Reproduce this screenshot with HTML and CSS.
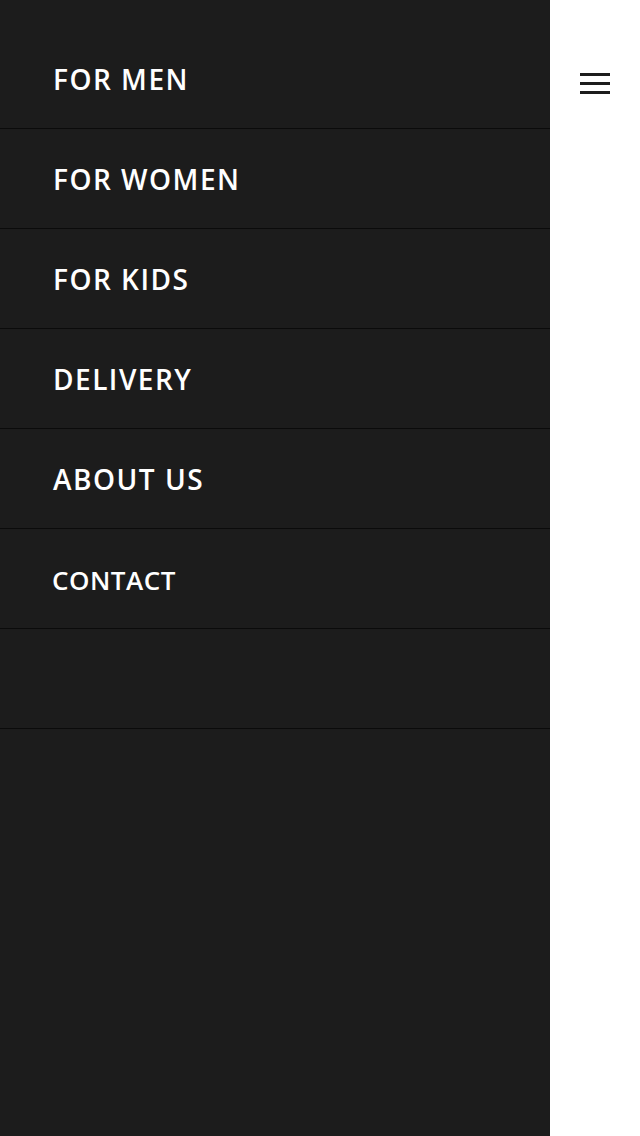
FILE: index.html
```html
<!DOCTYPE html>
<html>
<head>
<meta charset="utf-8">
<link rel="stylesheet" href="styles.css">
</head>
<body>
<div class="page">
  <nav class="panel">
    <ul class="menu">
      <li class="item"><a href="#">FOR MEN</a></li>
      <li class="item"><a href="#">FOR WOMEN</a></li>
      <li class="item"><a href="#">FOR KIDS</a></li>
      <li class="item"><a href="#">DELIVERY</a></li>
      <li class="item"><a href="#">ABOUT US</a></li>
      <li class="item contact"><a href="#">CONTACT</a></li>
      <li class="item empty"></li>
    </ul>
  </nav>
  <div class="side">
    <button class="burger" aria-label="menu">
      <span></span><span></span><span></span>
    </button>
  </div>
</div>
</body>
</html>
```

FILE: styles.css
```css
html, body {
  margin: 0;
  padding: 0;
  height: 100%;
  background: #ffffff;
}
.page {
  display: flex;
  height: 1136px;
}
.panel {
  width: 550px;
  background: #1c1c1c;
  padding-top: 29px;
  box-sizing: border-box;
}
.menu {
  list-style: none;
  margin: 0;
  padding: 0;
}
.item {
  height: 99px;
  border-bottom: 1px solid #0b0b0b;
  display: flex;
  align-items: center;
  padding-left: 53px;
}
.item a {
  font-family: "Open Sans", sans-serif;
  font-weight: 600;
  font-size: 28px;
  letter-spacing: 1.5px;
  color: #ffffff;
  text-decoration: none;
  line-height: 1;
  margin-top: 1px;
}
.item.contact {
  padding-left: 52px;
}
.item.contact a {
  font-size: 26px;
  letter-spacing: 0.5px;
  margin-top: 2px;
}
.side {
  flex: 1;
  position: relative;
}
.burger {
  position: absolute;
  left: 30px;
  top: 73px;
  width: 30px;
  height: 21px;
  padding: 0;
  border: 0;
  background: none;
  display: flex;
  flex-direction: column;
  justify-content: space-between;
}
.burger span {
  display: block;
  height: 3px;
  width: 30px;
  background: #1c1c1c;
}
```
